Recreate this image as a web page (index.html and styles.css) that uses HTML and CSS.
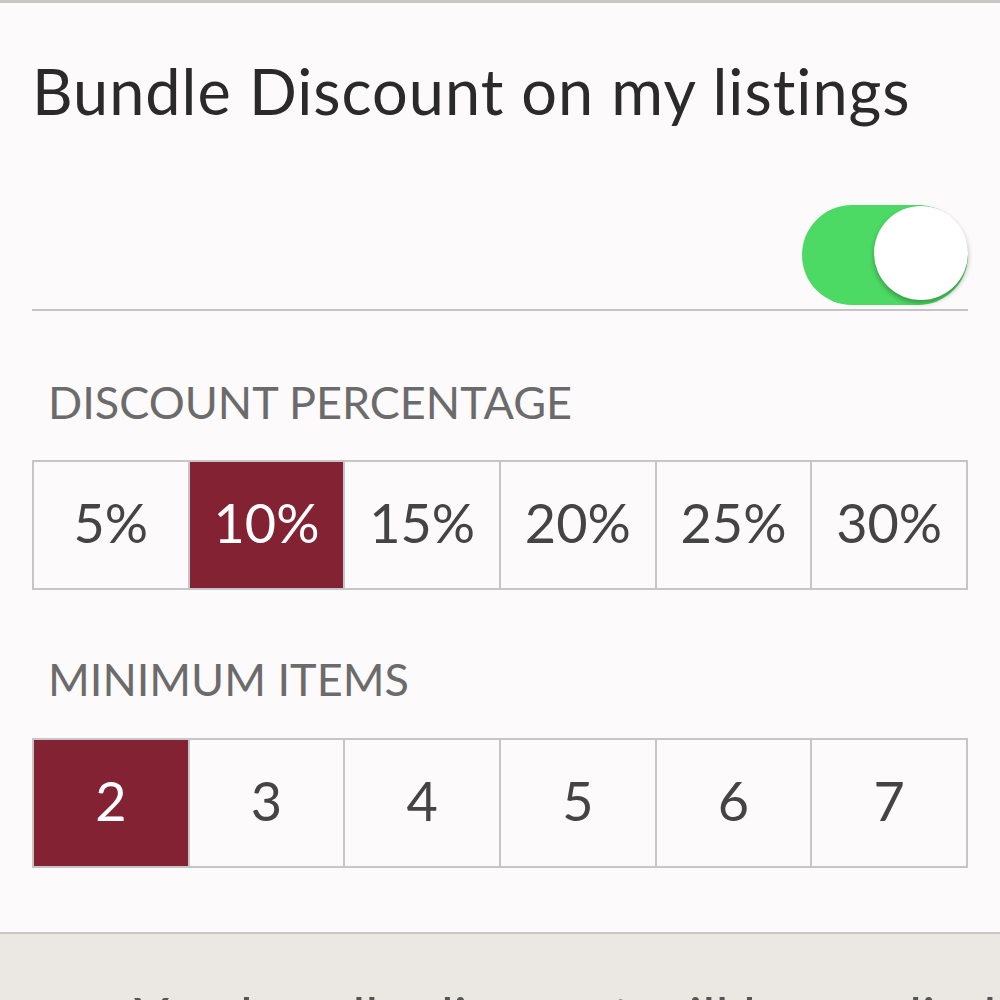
FILE: index.html
```html
<!DOCTYPE html>
<html lang="en">

<head>
  <meta charset="utf-8">
  <meta name="viewport" content="width=device-width, initial-scale=1.0">
  <title>Bundle Discount</title>
  <link rel="stylesheet" href="styles.css">
</head>

<body>
  <div class="settings">
    <h1 class="title">Bundle Discount on my listings</h1>

    <div class="toggle-row">
      <div class="toggle on">
        <div class="knob"></div>
      </div>
    </div>

    <div class="label">DISCOUNT PERCENTAGE</div>
    <div class="choices">
      <div class="choice">5%</div>
      <div class="choice selected">10%</div>
      <div class="choice">15%</div>
      <div class="choice">20%</div>
      <div class="choice">25%</div>
      <div class="choice">30%</div>
    </div>

    <div class="label label-items">MINIMUM ITEMS</div>
    <div class="choices">
      <div class="choice selected">2</div>
      <div class="choice">3</div>
      <div class="choice">4</div>
      <div class="choice">5</div>
      <div class="choice">6</div>
      <div class="choice">7</div>
    </div>
  </div>

  <div class="footer">
    <p class="note">You bundle discount will be applied</p>
  </div>
</body>

</html>
```

FILE: styles.css
```css
* {
  margin: 0;
  padding: 0;
  box-sizing: border-box;
}

body {
  font-family: 'Lato', 'Open Sans', Arial, sans-serif;
  background: #fcfafa;
  border-top: 3px solid #c9c7c4;
  height: 1000px;
  overflow: hidden;
}

.settings {
  padding: 0 32px;
}

.title {
  font-size: 63px;
  font-weight: 400;
  line-height: 1;
  letter-spacing: 1px;
  color: #2a2a2a;
  padding-top: 56px;
}

/* switch sits at the right, the rule under it is the row border */
.toggle-row {
  display: flex;
  justify-content: flex-end;
  margin-top: 83px;
  padding-bottom: 4px;
  border-bottom: 2px solid #c4c4c4;
}

.toggle {
  position: relative;
  width: 166px;
  height: 100px;
  border-radius: 50px;
  background: #4cd964;
}

.knob {
  position: absolute;
  top: 1px;
  right: 0;
  width: 94px;
  height: 94px;
  border-radius: 50%;
  background: #fff;
  box-shadow: 0 3px 5px rgba(0, 0, 0, 0.3);
}

.label {
  font-size: 45px;
  line-height: 1;
  color: #6b6b6b;
  margin: 69px 0 35px 16px;
}

.label-items {
  margin-top: 67px;
  margin-bottom: 36px;
}

.choices {
  display: grid;
  grid-template-columns: repeat(6, 1fr);
  gap: 2px;
  padding: 2px;
  background: #c6c6c6;
  height: 130px;
}

.choice {
  display: flex;
  align-items: center;
  justify-content: center;
  padding-bottom: 5px;
  background: #fcfafa;
  font-size: 54px;
  color: #444;
}

.choice.selected {
  background: #822232;
  color: #fff;
}

.footer {
  margin-top: 64px;
  border-top: 2px solid #c9c7c3;
  background: #ebe8e4;
  height: 200px;
}

.note {
  font-size: 56px;
  line-height: 1;
  color: #555;
  padding: 55px 0 0 134px;
  white-space: nowrap;
  overflow: hidden;
}
```
